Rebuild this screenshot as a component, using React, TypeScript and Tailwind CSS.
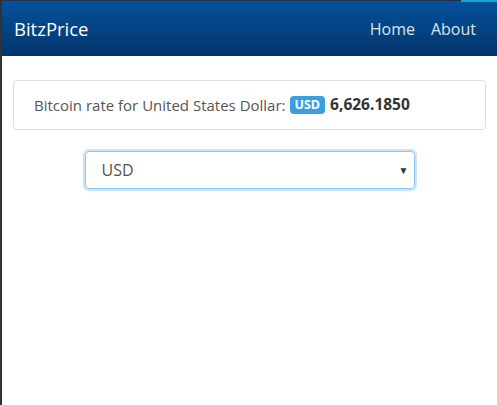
import React from "react";

const font = { fontFamily: '"Open Sans", "Segoe UI", sans-serif' };

export default function App() {
  return (
    <div
      className="w-[497px] h-[405px] bg-white border-l-2 border-[#333333] overflow-hidden"
      style={font}
    >
      <nav className="relative h-[56px] bg-gradient-to-b from-[#05529c] to-[#03356b] flex items-center justify-between pl-[12px] pr-[21px] border-t border-[#1d3350]">
        <div className="absolute top-[-1px] right-0 w-[36px] h-[2px] bg-[#1aa3d6]" />
        <span className="text-[18.5px] text-white">BitzPrice</span>
        <div className="flex gap-[16px] text-[16px] text-[#dde5ee]">
          <a>Home</a>
          <a>About</a>
        </div>
      </nav>
      <div className="px-[11px] pt-[24px]">
        <div className="h-[50px] border border-[#dddddd] rounded-[4px] flex items-center px-[20px] text-[15px] text-[#555555]">
          <span>Bitcoin rate for United States Dollar:</span>
          <span className="ml-[4px] bg-[#3a9fe0] text-white text-[12.5px] font-bold rounded-[4px] px-[5px] leading-[18px]">
            USD
          </span>
          <span className="ml-[5px] font-bold text-[#333333] text-[15.5px]">6,626.1850</span>
        </div>
        <div className="flex justify-center mt-[21px]">
          <div className="w-[330px] h-[38px] border border-[#8cc6ee] rounded-[4px] shadow-[0_0_0_2px_#c9e5f9] flex items-center justify-between pl-[16px] pr-[5px] text-[16px] text-[#555555]">
            <span>USD</span>
            <span className="text-[10px] text-[#333333]">▼</span>
          </div>
        </div>
      </div>
    </div>
  );
}
